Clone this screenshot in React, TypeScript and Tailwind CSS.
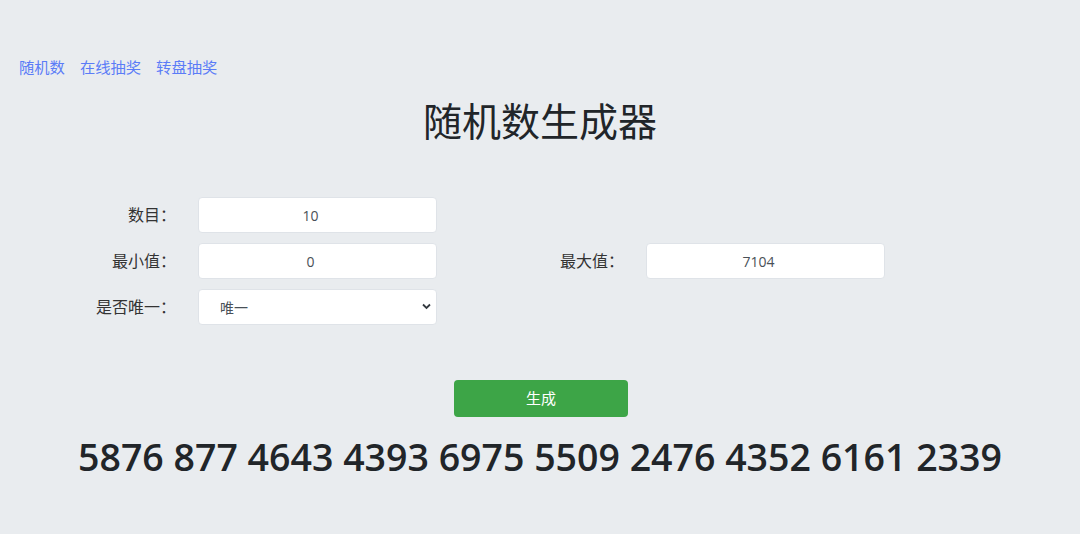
const font = { fontFamily: '"Open Sans", "Noto Sans CJK SC", sans-serif' }

const nums = [5876, 877, 4643, 4393, 6975, 5509, 2476, 4352, 6161, 2339]

const Field = ({ value }: { value: string }) => (
  <input
    readOnly
    value={value}
    className="h-[36px] w-full rounded-[4px] border border-[#dfe3e8] bg-white pr-[14px] text-center text-[14px] text-[#495057] outline-none"
  />
)

const Label = ({ text }: { text: string }) => (
  <div className="flex h-[36px] items-center justify-end pr-[7px] text-[16px] text-[#333]">{text}</div>
)

export default function App() {
  return (
    <div className="min-h-[534px] w-[1080px] bg-[#e9ecef]" style={font}>
      <nav className="flex gap-[15px] pl-[19px] pt-[56px] text-[15.3px] leading-[22px] text-[#5b7cf7]">
        <a>随机数</a>
        <a>在线抽奖</a>
        <a>转盘抽奖</a>
      </nav>

      <h1 className="mt-[20px] text-center text-[39px] leading-[46px] text-[#212529]">随机数生成器</h1>

      <div className="mt-[53px] grid grid-cols-[183px_239px_179px_239px] gap-x-[15px] gap-y-[10px]">
        <Label text="数目：" />
        <Field value="10" />
        <div />
        <div />

        <Label text="最小值：" />
        <Field value="0" />
        <Label text="最大值：" />
        <Field value="7104" />

        <Label text="是否唯一：" />
        <div className="relative">
          <select className="h-[36px] w-full appearance-none rounded-[4px] border border-[#dfe3e8] bg-white pl-[21px] text-[14px] text-[#495057] outline-none">
            <option>唯一</option>
          </select>
          <svg
            className="pointer-events-none absolute right-[6px] top-[14px]"
            width="9"
            height="7"
            viewBox="0 0 9 7"
          >
            <path d="M1 1.5 L4.5 5 L8 1.5" stroke="#343a40" strokeWidth="1.8" fill="none" />
          </svg>
        </div>
      </div>

      <div className="mt-[55px] flex justify-center pl-[2px]">
        <button className="h-[37px] w-[174px] rounded-[4px] bg-[#3da547] text-[15px] text-white">生成</button>
      </div>

      <div className="mt-[15px] text-center text-[37.5px] font-semibold leading-[50px] text-[#212529]">
        {nums.join(' ')}
      </div>
    </div>
  )
}
